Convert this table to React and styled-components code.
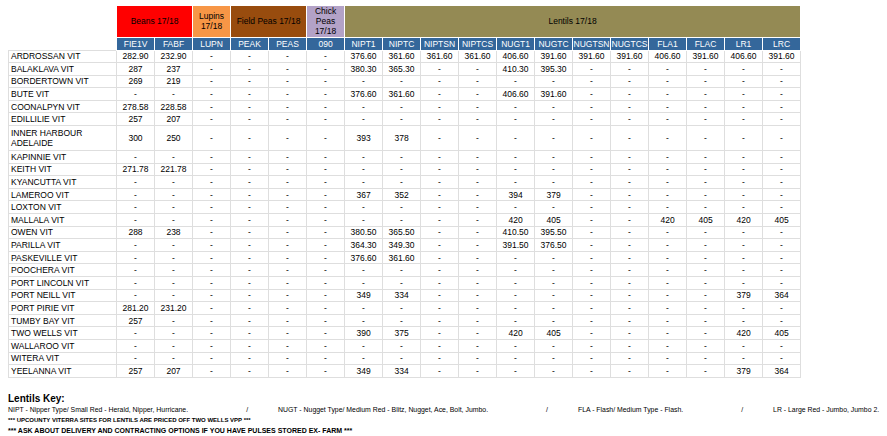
import React from 'react'
import styled, { createGlobalStyle } from 'styled-components'

const GlobalStyle = createGlobalStyle`
  body {
    margin: 0;
    background: #fff;
    color: #000;
    font-family: "Liberation Sans", Arial, sans-serif;
  }
`

const Page = styled.div`
  padding: 6px 0 0 8px;
`

const Sheet = styled.table`
  border-collapse: collapse;
  table-layout: fixed;
  width: 792px;
  font-size: 8.5px;
  line-height: 10px;
`

const NameCol = styled.col`
  width: 108px;
`

const CodeCol = styled.col`
  width: 38px;
`

const GroupRow = styled.tr`
  height: 31px;
`

const Blank = styled.th`
  border: none;
  background: #fff;
`

const GroupCell = styled.th`
  background: ${(p) => p.$bg};
  border: 1px solid #fff;
  border-top: none;
  font-weight: normal;
  text-align: center;
  vertical-align: middle;
  padding: 0 1px;
`

const CodeRow = styled.tr`
  height: 13px;
`

const CodeCell = styled.th`
  background: #34679b;
  color: #fff;
  border: 1px solid #fff;
  font-weight: normal;
  text-align: center;
  padding: 0;
  white-space: nowrap;
  overflow: hidden;
`

const Row = styled.tr`
  height: ${(p) => (p.$tall ? '25px' : '12.6px')};
`

const NameCell = styled.td`
  border: 1px solid #dedede;
  padding: 0 2px;
  text-align: left;
  vertical-align: middle;
`

const ValueCell = styled.td`
  border: 1px solid #dedede;
  padding: 0;
  text-align: center;
  vertical-align: middle;
  white-space: nowrap;
`

const Key = styled.div`
  margin-top: 15px;
`

const KeyTitle = styled.div`
  font-size: 10px;
  font-weight: 700;
  line-height: 12px;
`

const KeyLine = styled.div`
  display: flex;
  font-size: 6.9px;
  line-height: 10.5px;
  white-space: nowrap;
`

const Slash = styled.span`
  margin: 0 30px 0 58px;
`

const Note = styled.div`
  font-size: ${(p) => p.$size};
  font-weight: 700;
  line-height: 10.5px;
  white-space: nowrap;
`

const groups = [
  { label: 'Beans 17/18', span: 2, bg: '#ff0000' },
  { label: 'Lupins 17/18', span: 1, bg: '#f79646' },
  { label: 'Field Peas 17/18', span: 2, bg: '#984c0e' },
  { label: 'Chick Peas 17/18', span: 1, bg: '#b3a2c7' },
  { label: 'Lentils 17/18', span: 12, bg: '#948a54' },
]

const codes = [
  'FIE1V', 'FABF', 'LUPN', 'PEAK', 'PEAS', '090',
  'NIPT1', 'NIPTC', 'NIPTSN', 'NIPTCS', 'NUGT1', 'NUGTC',
  'NUGTSN', 'NUGTCS', 'FLA1', 'FLAC', 'LR1', 'LRC',
]

const sites = [
  { name: 'ARDROSSAN VIT', v: { FIE1V: '282.90', FABF: '232.90', NIPT1: '376.60', NIPTC: '361.60', NIPTSN: '361.60', NIPTCS: '361.60', NUGT1: '406.60', NUGTC: '391.60', NUGTSN: '391.60', NUGTCS: '391.60', FLA1: '406.60', FLAC: '391.60', LR1: '406.60', LRC: '391.60' } },
  { name: 'BALAKLAVA VIT', v: { FIE1V: '287', FABF: '237', NIPT1: '380.30', NIPTC: '365.30', NUGT1: '410.30', NUGTC: '395.30' } },
  { name: 'BORDERTOWN VIT', v: { FIE1V: '269', FABF: '219' } },
  { name: 'BUTE VIT', v: { NIPT1: '376.60', NIPTC: '361.60', NUGT1: '406.60', NUGTC: '391.60' } },
  { name: 'COONALPYN VIT', v: { FIE1V: '278.58', FABF: '228.58' } },
  { name: 'EDILLILIE VIT', v: { FIE1V: '257', FABF: '207' } },
  { name: 'INNER HARBOUR ADELAIDE', tall: true, v: { FIE1V: '300', FABF: '250', NIPT1: '393', NIPTC: '378' } },
  { name: 'KAPINNIE VIT', v: {} },
  { name: 'KEITH VIT', v: { FIE1V: '271.78', FABF: '221.78' } },
  { name: 'KYANCUTTA VIT', v: {} },
  { name: 'LAMEROO VIT', v: { NIPT1: '367', NIPTC: '352', NUGT1: '394', NUGTC: '379' } },
  { name: 'LOXTON VIT', v: {} },
  { name: 'MALLALA VIT', v: { NUGT1: '420', NUGTC: '405', FLA1: '420', FLAC: '405', LR1: '420', LRC: '405' } },
  { name: 'OWEN VIT', v: { FIE1V: '288', FABF: '238', NIPT1: '380.50', NIPTC: '365.50', NUGT1: '410.50', NUGTC: '395.50' } },
  { name: 'PARILLA VIT', v: { NIPT1: '364.30', NIPTC: '349.30', NUGT1: '391.50', NUGTC: '376.50' } },
  { name: 'PASKEVILLE VIT', v: { NIPT1: '376.60', NIPTC: '361.60' } },
  { name: 'POOCHERA VIT', v: {} },
  { name: 'PORT LINCOLN VIT', v: {} },
  { name: 'PORT NEILL VIT', v: { NIPT1: '349', NIPTC: '334', LR1: '379', LRC: '364' } },
  { name: 'PORT PIRIE VIT', v: { FIE1V: '281.20', FABF: '231.20' } },
  { name: 'TUMBY BAY VIT', v: { FIE1V: '257' } },
  { name: 'TWO WELLS VIT', v: { NIPT1: '390', NIPTC: '375', NUGT1: '420', NUGTC: '405', LR1: '420', LRC: '405' } },
  { name: 'WALLAROO VIT', v: {} },
  { name: 'WITERA VIT', v: {} },
  { name: 'YEELANNA VIT', v: { FIE1V: '257', FABF: '207', NIPT1: '349', NIPTC: '334', LR1: '379', LRC: '364' } },
]

const lentilKey = [
  'NIPT - Nipper Type/ Small Red - Herald, Nipper, Hurricane.',
  'NUGT - Nugget Type/ Medium Red - Blitz, Nugget, Ace, Bolt, Jumbo.',
  'FLA - Flash/ Medium Type - Flash.',
  'LR - Large Red - Jumbo, Jumbo 2.',
]

export default function App() {
  return (
    <Page>
      <GlobalStyle />
      <Sheet>
        <colgroup>
          <NameCol />
          {codes.map((c) => <CodeCol key={c} />)}
        </colgroup>
        <thead>
          <GroupRow>
            <Blank rowSpan={2} />
            {groups.map((g) => (
              <GroupCell key={g.label} colSpan={g.span} $bg={g.bg}>{g.label}</GroupCell>
            ))}
          </GroupRow>
          <CodeRow>
            {codes.map((c) => <CodeCell key={c}>{c}</CodeCell>)}
          </CodeRow>
        </thead>
        <tbody>
          {sites.map((s) => (
            <Row key={s.name} $tall={s.tall}>
              <NameCell>{s.name}</NameCell>
              {codes.map((c) => <ValueCell key={c}>{s.v[c] || '-'}</ValueCell>)}
            </Row>
          ))}
        </tbody>
      </Sheet>
      <Key>
        <KeyTitle>Lentils Key:</KeyTitle>
        <KeyLine>
          {lentilKey.map((k, i) => (
            <React.Fragment key={k}>
              {i > 0 && <Slash>/</Slash>}
              <span>{k}</span>
            </React.Fragment>
          ))}
        </KeyLine>
        <Note $size="6px">*** UPCOUNTY VITERRA SITES FOR LENTILS ARE PRICED OFF TWO WELLS VPP ***</Note>
        <Note $size="7px">*** ASK ABOUT DELIVERY AND CONTRACTING OPTIONS IF YOU HAVE PULSES STORED EX- FARM ***</Note>
      </Key>
    </Page>
  )
}
